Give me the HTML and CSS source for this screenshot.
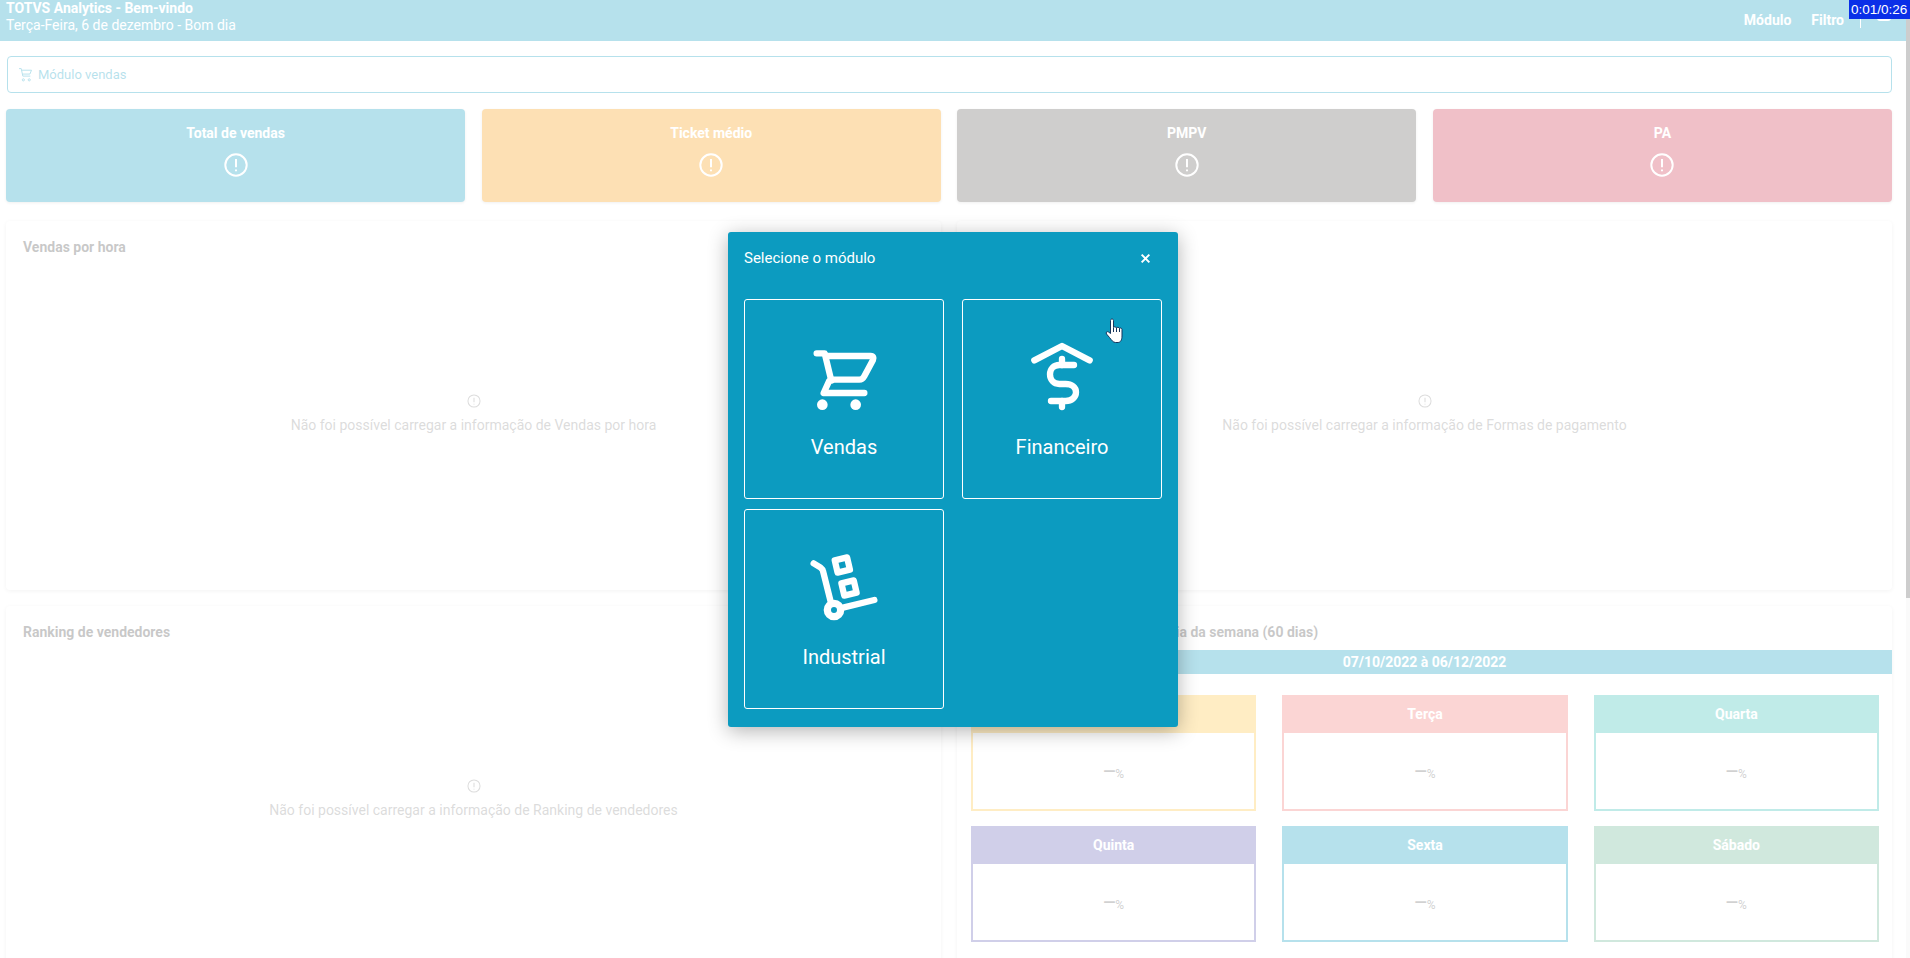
FILE: index.html
```html
<!DOCTYPE html>
<html lang="pt-BR">

<head>
    <meta charset="UTF-8">
    <meta name="viewport" content="width=device-width, initial-scale=1.0">
    <title>TOTVS Analytics</title>

    <link rel="stylesheet" href="styles.css">
</head>

<body>
    <div class="page">
        <header class="top">
            <div class="top-text">
                <strong>TOTVS Analytics - Bem-vindo</strong>
                <span>Terça-Feira, 6 de dezembro - Bom dia</span>
            </div>
            <nav class="top-nav">
                <a>Módulo</a>
                <a>Filtro</a>
                <i class="divider"></i>
                <i class="user"></i>
            </nav>
        </header>

        <main class="content">
            <div class="module-bar">
                <svg class="module-icon" viewBox="0 0 14 14">
                    <path d="M1 1.5h2l1.5 7h7M3.4 3h9.2l-1.5 3.6H4.2" />
                    <circle cx="5" cy="12" r="1" />
                    <circle cx="10.5" cy="12" r="1" />
                </svg>
                Módulo vendas
            </div>

            <!-- cartoes de resumo -->
            <section class="cards">
                <div class="card c-blue">
                    <h3>Total de vendas</h3>
                    <svg class="alert" viewBox="0 0 22 22"><circle cx="11" cy="11" r="9.8" /><path d="M11 5.5v7.5M11 15.2v1.6" /></svg>
                </div>
                <div class="card c-orange">
                    <h3>Ticket médio</h3>
                    <svg class="alert" viewBox="0 0 22 22"><circle cx="11" cy="11" r="9.8" /><path d="M11 5.5v7.5M11 15.2v1.6" /></svg>
                </div>
                <div class="card c-gray">
                    <h3>PMPV</h3>
                    <svg class="alert" viewBox="0 0 22 22"><circle cx="11" cy="11" r="9.8" /><path d="M11 5.5v7.5M11 15.2v1.6" /></svg>
                </div>
                <div class="card c-pink">
                    <h3>PA</h3>
                    <svg class="alert" viewBox="0 0 22 22"><circle cx="11" cy="11" r="9.8" /><path d="M11 5.5v7.5M11 15.2v1.6" /></svg>
                </div>
            </section>

            <section class="panels">
                <div class="panel">
                    <h4>Vendas por hora</h4>
                    <div class="empty">
                        <svg class="alert-sm" viewBox="0 0 22 22"><circle cx="11" cy="11" r="9.5" /><path d="M11 6v7M11 15.2v1.4" /></svg>
                        <p>Não foi possível carregar a informação de Vendas por hora</p>
                    </div>
                </div>
                <div class="panel">
                    <h4>Formas de pagamento</h4>
                    <div class="empty">
                        <svg class="alert-sm" viewBox="0 0 22 22"><circle cx="11" cy="11" r="9.5" /><path d="M11 6v7M11 15.2v1.4" /></svg>
                        <p>Não foi possível carregar a informação de Formas de pagamento</p>
                    </div>
                </div>
                <div class="panel">
                    <h4>Ranking de vendedores</h4>
                    <div class="empty">
                        <svg class="alert-sm" viewBox="0 0 22 22"><circle cx="11" cy="11" r="9.5" /><path d="M11 6v7M11 15.2v1.4" /></svg>
                        <p>Não foi possível carregar a informação de Ranking de vendedores</p>
                    </div>
                </div>
                <div class="panel">
                    <h4 class="week-title">Percentual de vendas por cada dia da semana (60 dias)</h4>
                    <div class="date-bar">07/10/2022 à 06/12/2022</div>
                    <div class="days">
                        <div class="day d-yellow"><b>Segunda</b><div class="pct"><i>—</i>%</div></div>
                        <div class="day d-red"><b>Terça</b><div class="pct"><i>—</i>%</div></div>
                        <div class="day d-teal"><b>Quarta</b><div class="pct"><i>—</i>%</div></div>
                        <div class="day d-purple"><b>Quinta</b><div class="pct"><i>—</i>%</div></div>
                        <div class="day d-blue"><b>Sexta</b><div class="pct"><i>—</i>%</div></div>
                        <div class="day d-green"><b>Sábado</b><div class="pct"><i>—</i>%</div></div>
                    </div>
                </div>
            </section>
        </main>

        <!-- modal de modulos -->
        <div class="backdrop">
            <div class="modal">
                <div class="modal-head">
                    <span>Selecione o módulo</span>
                    <svg class="close" viewBox="0 0 10 10"><path d="M1.5 1.5l7 7M8.5 1.5l-7 7" /></svg>
                </div>
                <div class="modules">
                    <div class="module">
                        <svg viewBox="264 342 216 216" class="m-line">
                            <path d="M290 385h24l20 82h-6l-17 37h122" />
                            <path d="M318 393h134c8 0 10 6 7 12l-27 50c-3 6-7 9-14 9h-84" />
                            <circle class="dot" cx="307" cy="539" r="16" />
                            <circle class="dot" cx="407" cy="539" r="16" />
                        </svg>
                        <span>Vendas</span>
                    </div>
                    <div class="module">
                        <svg viewBox="918 342 216 216" class="m-line">
                            <path d="M943 406l83-43 83 43" />
                            <path d="M1026 402v18M1026 528v18" />
                            <path d="M1062 420h-44c-17 0-28 12-28 28s11 29 28 29h19c18 0 31 10 31 25s-13 26-31 26h-44" />
                        </svg>
                        <span>Financeiro</span>
                    </div>
                    <div class="module">
                        <svg viewBox="264 147 216 216" class="m-line">
                            <path d="M281 190l21 13c4 3 6 5 7 10l24 96" />
                            <path d="M372 322l91-22" />
                            <circle cx="342" cy="330" r="20" stroke-width="22" />
                            <rect x="348" y="176" width="38" height="38" transform="rotate(-13 367 195)" />
                            <rect x="368" y="245" width="38" height="38" transform="rotate(-13 387 264)" />
                        </svg>
                        <span>Industrial</span>
                    </div>
                </div>
            </div>
        </div>
    </div>

    <div class="scrollbar"><div class="thumb"></div></div>

    <div class="timer">0:01/0:26</div>

    <svg class="hand" viewBox="0 0 18 26">
        <path d="M5.5 2.5C5.5.5 8.5.5 8.5 2.5V9.5C9 8.5 11 8.5 11.5 10 12 9 14 9 14.5 10.5 15 9.5 17 10 17 11.5V18C17 22 15.5 24.5 13 24.5H10.5C8 24.5 6.5 22 4.5 19.5L1.5 16C.5 14.5 2 13 3.5 14L5.5 15.5Z" />
        <path d="M8.5 10V14M11.5 10V14M14.5 10.5V14" />
    </svg>
</body>

</html>
```

FILE: styles.css
```css
* {
    margin: 0;
    padding: 0;
    box-sizing: border-box;
}

html,
body {
    height: 958px;
    overflow: hidden;
}

body {
    display: flex;
    font-family: Roboto, "Liberation Sans", sans-serif;
    font-size: 14px;
    color: #fff;
    background: #fff;
}

.page {
    position: relative;
    flex: 1;
    overflow: hidden;
}

/* topo */
.top {
    display: flex;
    justify-content: space-between;
    height: 41px;
    padding: 0 6px;
    background: #0c9bc0;
    line-height: 17px;
}

.top-text {
    display: flex;
    flex-direction: column;
}

.top-nav {
    display: flex;
    align-items: center;
    font-weight: 700;
    padding-right: 9px;
}

.top-nav a {
    margin-right: 20px;
}

.divider {
    width: 1px;
    height: 14px;
    background: #fff;
    margin: 0 16px 0 -4px;
}

.user {
    width: 14px;
    height: 14px;
    margin-top: -14px;
    border: 2px solid #fff;
    border-radius: 3px;
}

.content {
    display: flex;
    flex-direction: column;
    padding: 15px 14px 0 6px;
}

.module-bar {
    display: flex;
    align-items: center;
    height: 37px;
    margin-left: 1px;
    padding-left: 10px;
    border: 1px solid #0c9bc0;
    border-radius: 4px;
    color: #0c9bc0;
    font-size: 13px;
}

.module-icon {
    width: 15px;
    height: 15px;
    margin-right: 5px;
    fill: none;
    stroke: #0c9bc0;
    stroke-width: .9;
}

/* cartoes */
.cards {
    display: grid;
    grid-template-columns: repeat(4, 1fr);
    column-gap: 16.4px;
    margin-top: 16px;
}

.card {
    display: flex;
    flex-direction: column;
    align-items: center;
    height: 93px;
    padding-top: 16px;
    border-radius: 4px;
    box-shadow: 0 1px 3px rgba(0, 0, 0, .2);
}

.card h3 {
    font-size: 14px;
    line-height: 17px;
    font-weight: 700;
}

.alert {
    width: 24px;
    height: 24px;
    margin-top: 11px;
    fill: none;
    stroke: #fff;
    stroke-width: 1.8;
}

.c-blue { background: #0c9bc0; }
.c-orange { background: #f89805; }
.c-gray { background: #5f5c58; }
.c-pink { background: #cd2d48; }

/* paineis */
.panels {
    display: grid;
    grid-template-columns: repeat(2, 1fr);
    grid-auto-rows: 369px;
    gap: 16px;
    margin-top: 19px;
}

.panel {
    display: flex;
    flex-direction: column;
    border-radius: 4px;
    background: #fff;
    box-shadow: 0 1px 4px rgba(0, 0, 0, .16);
}

.panel h4 {
    padding: 18px 17px 0;
    font-size: 14px;
    line-height: 17px;
    font-weight: 700;
    color: #484848;
}

.panel h4.week-title {
    padding-left: 14px;
}

.empty {
    display: flex;
    flex: 1;
    flex-direction: column;
    align-items: center;
    justify-content: center;
    padding-bottom: 18px;
    color: #8a8a8a;
    line-height: 17px;
}

.alert-sm {
    width: 14px;
    height: 14px;
    margin-bottom: 9px;
    fill: none;
    stroke: #8a8a8a;
    stroke-width: 1.6;
}

.date-bar {
    margin-top: 9px;
    height: 24px;
    line-height: 24px;
    text-align: center;
    font-weight: 700;
    background: #0c9bc0;
}

.days {
    display: grid;
    grid-template-columns: repeat(3, 1fr);
    gap: 15px 26px;
    margin-top: 21px;
    padding: 0 13px 0 14px;
}

.day {
    display: flex;
    flex-direction: column;
    height: 116px;
    border: 2px solid;
    border-top: 0;
}

.day b {
    height: 38px;
    margin: 0 -2px;
    line-height: 38px;
    text-align: center;
    color: #fff;
}

.pct {
    flex: 1;
    display: flex;
    align-items: center;
    justify-content: center;
    padding-top: 6px;
    font-size: 12px;
    color: #666;
}

.pct i {
    font-style: normal;
    font-weight: 700;
    font-size: 16px;
    margin-top: -5px;
}

.d-yellow { border-color: #fdc339; }
.d-yellow b { background: #fdc339; }
.d-red { border-color: #f27370; }
.d-red b { background: #f27370; }
.d-teal { border-color: #2dbcb2; }
.d-teal b { background: #2dbcb2; }
.d-purple { border-color: #625fb6; }
.d-purple b { background: #625fb6; }
.d-blue { border-color: #0c9bc0; }
.d-blue b { background: #0c9bc0; }
.d-green { border-color: #62b28e; }
.d-green b { background: #62b28e; }

/* modal */
.backdrop {
    position: absolute;
    inset: 0;
    display: flex;
    justify-content: center;
    align-items: flex-start;
    padding-top: 232px;
    background: rgba(255, 255, 255, .7);
}

.modal {
    width: 450px;
    padding: 0 16px 18px;
    border-radius: 3px;
    background: #0c9bc0;
    box-shadow: 0 4px 20px rgba(0, 0, 0, .3);
}

.modal-head {
    display: flex;
    justify-content: space-between;
    align-items: center;
    height: 67px;
    padding: 0 11px 15px 0;
    font-size: 15px;
}

.close {
    width: 11px;
    height: 11px;
    fill: none;
    stroke: #fff;
    stroke-width: 1.8;
}

.modules {
    display: grid;
    grid-template-columns: 200px 200px;
    column-gap: 18px;
    row-gap: 10px;
}

.module {
    display: flex;
    flex-direction: column;
    align-items: center;
    height: 200px;
    padding-top: 39px;
    border: 1px solid #fff;
    border-radius: 3px;
    font-size: 20px;
    line-height: 24px;
}

.module span {
    margin-top: 24px;
}

.m-line {
    width: 72px;
    height: 72px;
    fill: none;
    stroke: #fff;
    stroke-width: 19;
    stroke-linecap: round;
    stroke-linejoin: round;
}

.m-line .dot {
    fill: #fff;
    stroke: none;
}

/* barra de rolagem e sobreposicoes do video */
.scrollbar {
    width: 4px;
    background: #fafafa;
}

.thumb {
    height: 598px;
    background: #cdcdcd;
}

.timer {
    position: fixed;
    top: 0;
    right: 0;
    width: 61px;
    height: 19px;
    padding-left: 2px;
    background: #0a2fe8;
    font-family: "Liberation Sans", sans-serif;
    font-size: 13.5px;
    line-height: 19px;
    white-space: nowrap;
}

.hand {
    position: fixed;
    left: 1105px;
    top: 318px;
    width: 18px;
    height: 26px;
    fill: #fff;
    stroke: #16355c;
    stroke-width: 1;
}
```
